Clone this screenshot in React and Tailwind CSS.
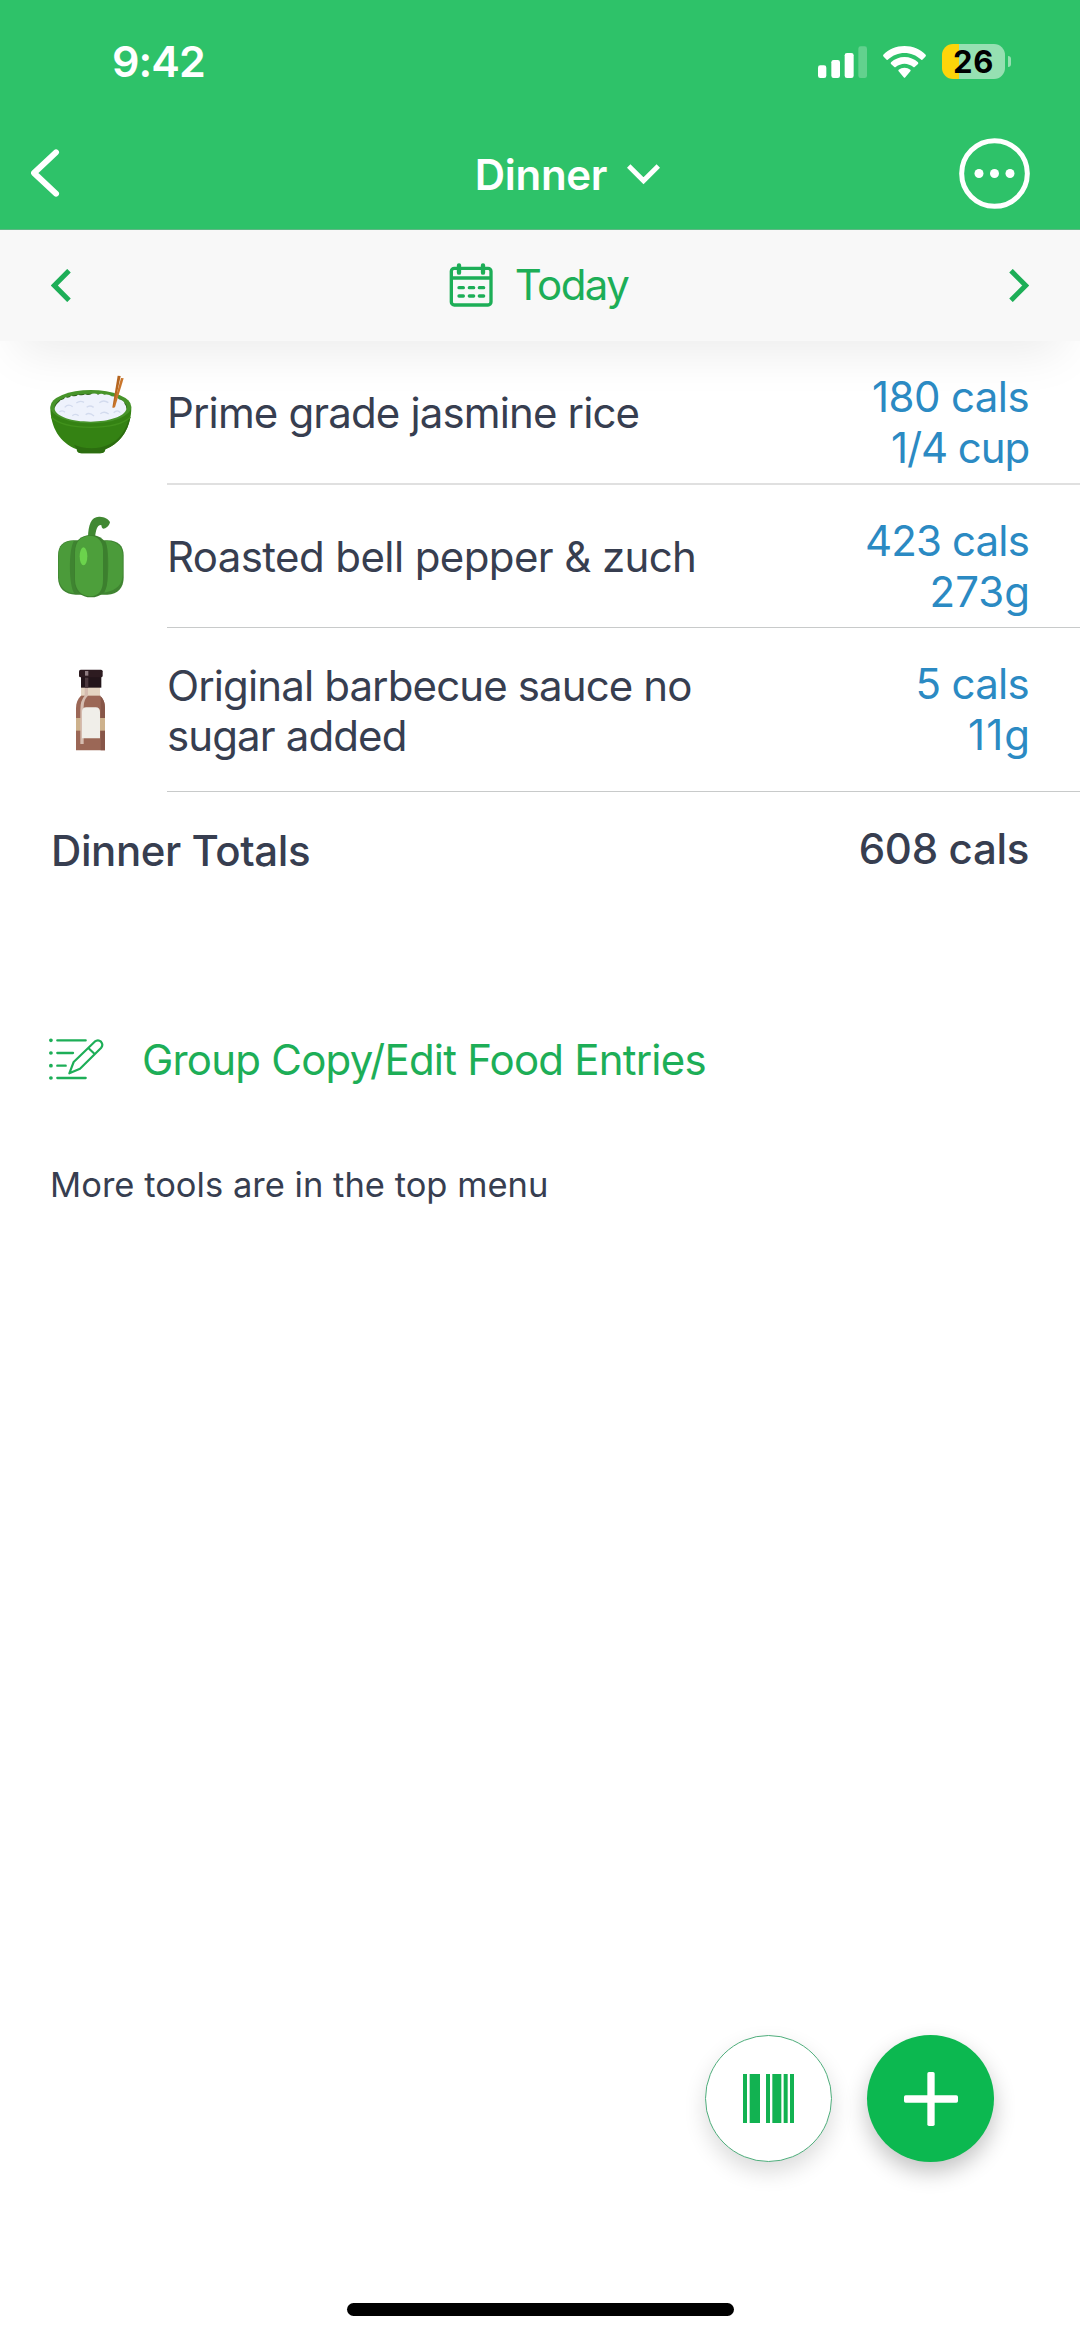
function StatusBar() {
  return (
    <div className="flex h-[118px] items-center justify-between pt-[5px] pr-[69px] pl-[112px]">
      <span className="text-[43px] leading-none font-semibold tracking-[-0.95px]">9:42</span>
      <div className="flex items-center">
        <svg className="h-[32px] w-[49px]" viewBox="0 0 147 96" fill="currentColor">
          <rect x="0" y="58" width="25" height="38" rx="7" />
          <rect x="40" y="42" width="26" height="54" rx="7" />
          <rect x="80" y="21" width="27" height="75" rx="7" />
          <rect x="121" y="1" width="26" height="95" rx="7" opacity=".25" />
        </svg>
        <svg className="ml-4 h-[32px] w-[43px]" viewBox="0 0 129 96" fill="currentColor">
          <path d="M64.500 0C89 0 112 10 128 26Q130 29 127 32L118 41Q116 43 113 40C100 28 83 21 64.500 21S29 28 16 40Q13 43 11 41L2 32Q-1 29 1 26C17 10 40 0 64.500 0Z" />
          <path d="M64.500 33C80 33 94 39 105 49Q107 52 105 54L95 63Q93 65 90 62C83 57 74 53 64.500 53S46 57 39 62Q36 65 34 63L24 54Q22 52 24 49C35 39 49 33 64.500 33Z" />
          <path d="M64.500 65C71 65 77 67 82 71Q84 74 82 76L67 94Q64.500 97 62 94L47 76Q45 74 47 71C52 67 58 65 64.500 65Z" />
        </svg>
        <div className="ml-4 flex h-[35px] w-[63px] items-center justify-center rounded-[11px] bg-[linear-gradient(90deg,#fdd50a_0_17px,#96e0b2_17px)]">
          <span className="text-[31px] leading-none font-bold tracking-[0.6px] text-black">26</span>
        </div>
        <div className="ml-[3px] h-[11px] w-[3px] rounded-r-full bg-[#96e0b2]" />
      </div>
    </div>
  );
}

function NavBar() {
  return (
    <div className="grid h-[112px] grid-cols-[1fr_auto_1fr] items-center border-b border-[#5fb784] pr-[50px] pb-px pl-[31px]">
      <svg className="h-[50px] w-[30px]" viewBox="0 0 90 150" fill="none" stroke="currentColor" strokeWidth="18" strokeLinecap="round" strokeLinejoin="round">
        <path d="M75 13 L9 75 L75 137" />
      </svg>
      <div className="flex items-center gap-5 pt-[3px] pl-[74px]">
        <span className="text-[42px] leading-none font-semibold tracking-[-0.3px]">Dinner</span>
        <svg className="h-[21px] w-[33px]" viewBox="0 0 99 63" fill="none" stroke="currentColor" strokeWidth="15">
          <path d="M5 6 L49.500 50 L94 6" />
        </svg>
      </div>
      <svg className="h-[71px] w-[71px] justify-self-end" viewBox="0 0 213 213">
        <circle cx="106.500" cy="106.500" r="98.500" fill="none" stroke="currentColor" strokeWidth="15" />
        <g fill="currentColor">
          <circle cx="60" cy="106.500" r="13.500" />
          <circle cx="106.500" cy="106.500" r="13.500" />
          <circle cx="153" cy="106.500" r="13.500" />
        </g>
      </svg>
    </div>
  );
}

function DateBar() {
  return (
    <div className="flex h-[110.500px] items-center justify-between bg-[#f8f8f8] px-[51px] text-[#1dae57] shadow-[0_30px_48px_-18px_rgba(0,0,0,0.08)]">
      <svg className="h-[33px] w-[20px]" viewBox="0 0 60 99" fill="none" stroke="currentColor" strokeWidth="15">
        <path d="M54 5 L10 49.500 L54 94" />
      </svg>
      <div className="flex items-center gap-[22px] pr-[3px]">
        <svg className="mb-px h-[44px] w-[44px]" viewBox="28 428 132 132" fill="none" stroke="currentColor" strokeWidth="10">
          <rect x="35" y="444" width="119" height="110" rx="9" />
          <path d="M35 473 H154" strokeWidth="11" />
          <path d="M58 435 V457 M130 435 V457" strokeWidth="13" strokeLinecap="round" />
          <path d="M58 502 H71 M89 502 H102 M119 502 H132 M58 527 H71 M89 527 H102 M119 527 H132" strokeLinecap="round" />
        </svg>
        <span className="text-[42px] leading-none tracking-[-1.6px]">Today</span>
      </div>
      <svg className="h-[33px] w-[20px]" viewBox="0 0 60 99" fill="none" stroke="currentColor" strokeWidth="15">
        <path d="M6 5 L50 49.500 L6 94" />
      </svg>
    </div>
  );
}

function RiceBowl() {
  return (
    <svg className="h-[82px] w-[82px] shrink-0" viewBox="150 424 246 246">
      <path d="M151 530C151 590 180 637 230 656Q230 668 245 668H300Q315 668 316 656C365 637 394 590 394 530Z" fill="#348213" />
      <path d="M385 569C373 612 345 641 303 650C270 657 240 650 222 642Q226 650 231 656Q232 668 245 668H300Q315 668 316 656C356 640 383 606 391 560Z" fill="#2c6d10" />
      <path d="M154 560C180 584 225 590 272 590S365 584 391 560" fill="none" stroke="#41911c" strokeWidth="4" />
      <ellipse cx="272.500" cy="528" rx="121.500" ry="50" fill="#47942a" />
      <ellipse cx="272" cy="529" rx="108" ry="40" fill="#2e5f1c" />
      <path d="M164 535C166 520 176 517 182 508Q190 510 196 500Q207 504 214 495Q227 500 234 492Q248 496 255 491Q266 496 276 489Q288 487 294 492Q304 487 313 492Q326 489 335 497Q350 498 357 506Q372 509 374 520Q381 527 379 536C374 557 328 573 272 573S168 558 164 535Z" fill="#eef2fc" />
      <path d="M194 530Q205 518 218 528M229 517Q240 508 252 515M260 530Q269 522 281 530M298 516Q311 506 325 516M217 555Q225 547 236 555M257 552Q268 543 282 556M301 549Q313 540 326 550M178 544Q187 537 195 545M341 546Q352 535 361 546" fill="none" stroke="#d3dbee" strokeWidth="4" />
      <path d="M353 435L362 436L343 526L337 531Z" fill="#b5651f" />
      <path d="M363 442L371 443L345 530L338 532Z" fill="#c9752b" />
    </svg>
  );
}

function BellPepper() {
  return (
    <svg className="h-[82px] w-[82px] shrink-0" viewBox="60 76 246 246">
      <path d="M174 140C175 103 183 78 207 78C222 77 237 86 240 94C239 105 227 114 220 114C213 111 216 104 213 103C200 104 198 119 195 140Z" fill="#408832" />
      <path d="M132 149C100 149 84 165 84 195V260C84 294 106 312 137 312H232C264 311 281 292 281 260V195C281 166 266 150 232 149Z" fill="#3f8431" />
      <path d="M132 150C103 151 86 165 86 193V257C87 290 106 306 133 308C116 284 115 176 132 150Z" fill="#4b9b3a" />
      <path d="M226 150C256 150 278 165 278 192V250C278 280 262 299 223 306C239 274 238 177 226 150Z" fill="#4b9b3a" />
      <path d="M183 133C151 133 133 152 133 183V270C133 302 154 320 183 320S232 302 232 270V183C232 152 213 133 183 133Z" fill="#3c7f2e" />
      <path d="M178 135C151 137 136 153 135 183V268C136 299 154 316 181 317C207 316 219 299 219 268V178C218 151 204 136 178 135Z" fill="#4d9f3b" />
      <ellipse cx="160.500" cy="197" rx="11.500" ry="27" fill="#6bd34c" />
    </svg>
  );
}

function SauceBottle() {
  return (
    <svg className="h-[82px] w-[82px] shrink-0" viewBox="60 538 246 246">
      <path d="M153 592H210V618C221 627 225 640 225 656V782H138V656C138 640 143 627 153 618Z" fill="#9b6756" />
      <path d="M210 618C221 627 225 640 225 656V782H212V618Z" fill="#875648" />
      <path d="M153 592H210V618H153Z" fill="#e4d5c2" />
      <path d="M138 685H225V723H138Z" fill="#cdb18c" />
      <path d="M164 592H174V618Q161 630 161 650V763H151V660Q151 632 164 618Z" fill="#d5bcb0" />
      <path d="M156 746V667Q156 653 169 653H197Q210 653 210 667V746Z" fill="#f0eee9" />
      <path d="M153 562H214V594H153Z" fill="#23151a" />
      <rect x="147" y="540" width="71" height="23" rx="5" fill="#2d1b20" />
      <path d="M165 544H175V558H165Z" fill="#8e7c80" />
      <path d="M165 564H175V594H165Z" fill="#4b383d" />
    </svg>
  );
}

const entries = [
  {
    Icon: RiceBowl,
    name: "Prime grade jasmine rice",
    calories: "180 cals",
    amount: "1/4 cup",
    nameClass: "tracking-[-0.86px]",
    calClass: "tracking-[-0.6px]",
    amountClass: "tracking-[-1.1px]",
    rowClass: "h-[144.500px]",
    lineClass: "border-b-2 border-[#e0e0e0]",
  },
  {
    Icon: BellPepper,
    name: "Roasted bell pepper & zuch",
    calories: "423 cals",
    amount: "273g",
    nameClass: "tracking-[-0.6px]",
    calClass: "tracking-[-0.85px]",
    amountClass: "-mr-px tracking-[0px]",
    rowClass: "h-[143px]",
    lineClass: "border-b border-[#c8caca]",
  },
  {
    Icon: SauceBottle,
    name: "Original barbecue sauce no sugar added",
    calories: "5 cals",
    amount: "11g",
    nameClass: "tracking-[-0.88px]",
    calClass: "tracking-[-0.7px]",
    amountClass: "-mr-[2px] tracking-[1px]",
    rowClass: "h-[164px]",
    lineClass: "border-b border-[#c8caca]",
  },
];

function EntryRow({ entry }) {
  const { Icon } = entry;
  return (
    <li className={`flex items-center gap-[35px] pl-[50px] ${entry.rowClass}`}>
      <Icon />
      <div className={`flex h-full flex-1 justify-between pr-[51px] ${entry.lineClass}`}>
        <p className={`w-[560px] self-center pt-[2px] text-[42px] leading-[50px] ${entry.nameClass}`}>{entry.name}</p>
        <div className="pt-[30px] text-right text-[42px] leading-[51px] text-[#2b8ac3]">
          <p className={entry.calClass}>{entry.calories}</p>
          <p className={entry.amountClass}>{entry.amount}</p>
        </div>
      </div>
    </li>
  );
}

function EditListIcon() {
  return (
    <svg className="mb-[2px] h-[44px] w-[57px]" viewBox="85 709 171 132" fill="none" stroke="currentColor" strokeWidth="7" strokeLinecap="round" strokeLinejoin="round">
      <path d="M113 719H198M113 757H160M113 795H138M113 832H198" />
      <path d="M93.500 719h.5M93.500 757h.5M93.500 795h.5M93.500 832h.5" strokeWidth="11" />
      <path d="M149 818L162 784L225 723Q235 715 244 723Q252 732 244 742L181 804Z M206 742L225 760" strokeWidth="6.500" />
    </svg>
  );
}

function FloatingActions() {
  return (
    <div className="mt-auto flex justify-end gap-[35px] pr-[86px]">
      <button className="flex size-[127px] items-center justify-center rounded-full border border-[#4fae7c] bg-white text-[#12b251] shadow-[0_10px_22px_rgba(0,0,0,0.14)]">
        <svg className="h-[49px] w-[51px]" viewBox="0 0 153 147" fill="currentColor">
          <path d="M0 0h12v147H0zM20 0h31v147H20zM69 0h12v147H69zM88 0h27v147H88zM122 0h12v147H122zM141 0h12v147H141z" />
        </svg>
      </button>
      <button className="flex size-[127px] items-center justify-center rounded-full bg-[#0cb850] text-white shadow-[0_10px_22px_rgba(0,0,0,0.24)]">
        <svg className="size-[54px]" viewBox="0 0 162 162" fill="currentColor">
          <rect x="70" y="0" width="22" height="162" rx="5" />
          <rect x="0" y="70" width="162" height="22" rx="5" />
        </svg>
      </button>
    </div>
  );
}

export default function App() {
  return (
    <div className="flex h-[2336px] w-[1080px] flex-col overflow-hidden bg-white font-['Inter','Liberation_Sans',sans-serif] text-[#373e50]">
      <header className="bg-[#2ec269] text-white">
        <StatusBar />
        <NavBar />
      </header>
      <DateBar />
      <ul>
        {entries.map((entry) => (
          <EntryRow key={entry.name} entry={entry} />
        ))}
      </ul>
      <div className="flex h-[118px] items-center justify-between pr-[51px] pl-[51px] text-[42px] leading-none font-medium">
        <h2 className="tracking-[-0.42px]">Dinner Totals</h2>
        <span className="pb-[5px] tracking-[-0.33px]">608 cals</span>
      </div>
      <button className="mt-[110px] flex h-[80px] items-center gap-[37px] pl-[48px] text-[#1dae57]">
        <EditListIcon />
        <span className="text-[42px] leading-none tracking-[-0.79px]">Group Copy/Edit Food Entries</span>
      </button>
      <p className="mt-[60px] pl-[50px] text-[34.5px] leading-[50px] tracking-[0.02px]">More tools are in the top menu</p>
      <FloatingActions />
      <div className="mt-[141px] mb-5 h-[13px] w-[387px] self-center rounded-full bg-black" />
    </div>
  );
}
